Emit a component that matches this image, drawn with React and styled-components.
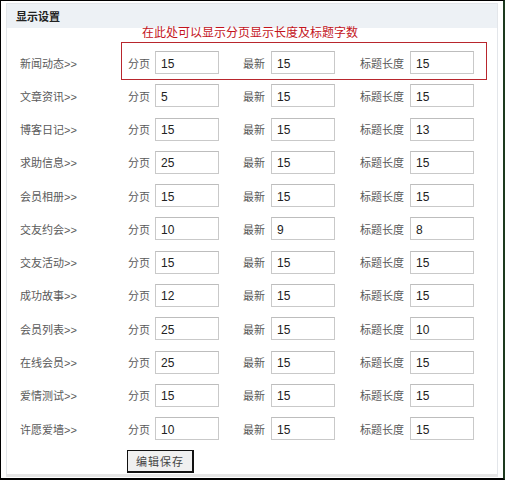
import React from "react";
import styled, { createGlobalStyle } from "styled-components";

const GlobalStyle = createGlobalStyle`
  html, body {
    margin: 0;
    padding: 0;
    background: #ffffff;
  }
  body {
    font-family: "Liberation Sans", "Noto Sans CJK SC", sans-serif;
    font-size: 12px;
    color: #5a5a5a;
  }
`;

const Frame = styled.div`
  box-sizing: border-box;
  width: 505px;
  height: 480px;
  border-top: 1px solid #000;
  border-left: 1px solid #000;
  border-right: 2px solid #1d3a1f;
  border-bottom: 2px solid #000;
  padding: 2px 5px 1px 5px;
  display: flex;
  flex-direction: column;
`;

const Panel = styled.section`
  flex: 1;
  display: flex;
  flex-direction: column;
  border: 1px solid #e3e6ea;
  border-bottom: 3px solid #e6e6e6;
  background: #fff;
`;

const PanelHeader = styled.header`
  height: 24px;
  display: flex;
  align-items: center;
  padding-left: 9px;
  background: #edf1f5;
  font-size: 11px;
  font-weight: bold;
  color: #222;
`;

const PanelBody = styled.div`
  flex: 1;
  display: flex;
  flex-direction: column;
`;

const Note = styled.div`
  height: 18px;
  padding-left: 135px;
  font-size: 12px;
  line-height: 12px;
  color: #c3141c;
  margin-top: -1px;
  margin-bottom: 1px;
`;

const Row = styled.div`
  height: 33.27px;
  display: flex;
  align-items: stretch;
  padding-left: 13px;
`;

const RowLabel = styled.div`
  width: 108px;
  display: flex;
  align-items: center;
  color: #5a5a5a;
  font-size: 11px;
`;

const Fields = styled.div`
  display: flex;
  align-items: center;
  ${(p) =>
    p.$highlight &&
    `
    border: 1px solid #b8262d;
    margin: -4px 0 -1px -7px;
    padding: 3px 12px 0 6px;
  `}
`;

const Field = styled.label`
  display: flex;
  align-items: center;
  margin-left: ${(p) => p.$offset || 0}px;
`;

const FieldName = styled.span`
  width: ${(p) => p.$width}px;
  color: #5a5a5a;
  font-size: 11px;
`;

const NumberInput = styled.input`
  box-sizing: border-box;
  width: 64px;
  height: 23px;
  margin: 0;
  padding: 2px 0 0 5px;
  border: 1px solid #c9c9c9;
  border-top-color: #bdbdbd;
  background: #fff;
  font-family: "Liberation Sans", sans-serif;
  font-size: 12px;
  color: #222;
  outline: none;
`;

const Footer = styled.div`
  padding-left: 120px;
  margin-top: 5px;
`;

const SaveButton = styled.button`
  box-sizing: border-box;
  width: 67px;
  height: 23px;
  margin: 0;
  padding: 0;
  border: 1px solid #111;
  border-right-width: 2px;
  border-bottom-width: 2px;
  background: #f0f0f0;
  font-family: "Noto Sans CJK SC", sans-serif;
  font-size: 11px;
  color: #444;
  letter-spacing: 1px;
`;

const modules = [
  ["新闻动态", 15, 15, 15],
  ["文章资讯", 5, 15, 15],
  ["博客日记", 15, 15, 13],
  ["求助信息", 25, 15, 15],
  ["会员相册", 15, 15, 15],
  ["交友约会", 10, 9, 8],
  ["交友活动", 15, 15, 15],
  ["成功故事", 12, 15, 15],
  ["会员列表", 25, 15, 10],
  ["在线会员", 25, 15, 15],
  ["爱情测试", 15, 15, 15],
  ["许愿爱墙", 10, 15, 15],
];

export default function App() {
  return (
    <>
      <GlobalStyle />
      <Frame>
        <Panel>
          <PanelHeader>显示设置</PanelHeader>
          <PanelBody>
            <Note>在此处可以显示分页显示长度及标题字数</Note>
            {modules.map(([name, page, latest, title], i) => (
              <Row key={name}>
                <RowLabel>{name}&gt;&gt;</RowLabel>
                <Fields $highlight={i === 0}>
                  <Field>
                    <FieldName $width={27}>分页</FieldName>
                    <NumberInput defaultValue={page} />
                  </Field>
                  <Field $offset={24}>
                    <FieldName $width={28}>最新</FieldName>
                    <NumberInput defaultValue={latest} />
                  </Field>
                  <Field $offset={25}>
                    <FieldName $width={50}>标题长度</FieldName>
                    <NumberInput defaultValue={title} />
                  </Field>
                </Fields>
              </Row>
            ))}
            <Footer>
              <SaveButton type="button">编辑保存</SaveButton>
            </Footer>
          </PanelBody>
        </Panel>
      </Frame>
    </>
  );
}
